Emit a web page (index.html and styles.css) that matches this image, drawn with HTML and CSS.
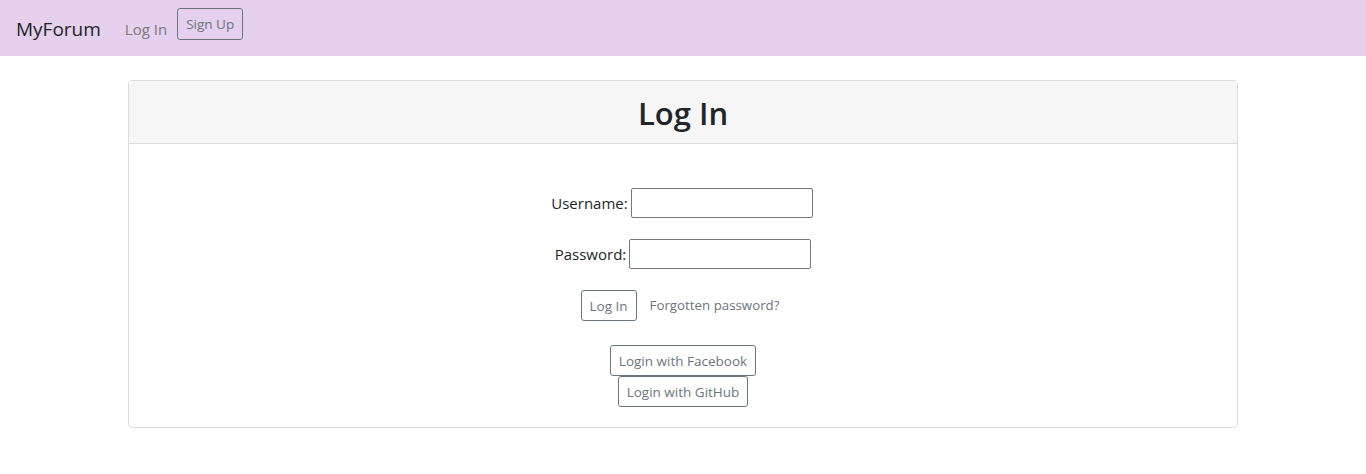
FILE: index.html
```html
<!DOCTYPE html>
<html>
<head>
<meta charset="utf-8">
<link rel="stylesheet" href="styles.css">
</head>
<body>
<nav class="navbar">
  <a class="brand" href="#">MyForum</a>
  <a class="nav-link" href="#">Log In</a>
  <a class="btn btn-sm" href="#">Sign Up</a>
</nav>
<main class="container">
  <section class="card">
    <header class="card-header"><h1>Log In</h1></header>
    <div class="card-body">
      <form class="login-form">
        <div class="field"><label>Username:</label><input class="u" type="text"></div>
        <div class="field"><label>Password:</label><input class="p" type="password"></div>
        <div class="actions">
          <button class="btn" type="button">Log In</button>
          <a class="link" href="#">Forgotten password?</a>
        </div>
      </form>
      <div class="social">
        <button class="btn" type="button">Login with Facebook</button>
        <button class="btn" type="button">Login with GitHub</button>
      </div>
    </div>
  </section>
</main>
</body>
</html>
```
FILE: styles.css
```css
* { box-sizing: border-box; }
body {
  margin: 0;
  font-family: "Open Sans", "Noto Sans", sans-serif;
  font-size: 15px;
  color: #212529;
  background: #fff;
}
a { text-decoration: none; }
.navbar {
  height: 56px;
  background: #e5d0ee;
  display: flex;
  align-items: center;
  padding: 0 16px;
}
.brand {
  font-size: 19px;
  color: #212529;
  margin-right: 24px;
  position: relative;
  top: 1px;
}
.nav-link {
  color: #7a7a7a;
  font-size: 15px;
  margin-right: 10px;
  position: relative;
  top: 1px;
}
.btn {
  display: inline-flex;
  align-items: center;
  justify-content: center;
  font-family: inherit;
  font-size: 13.5px;
  color: #6c757d;
  background: transparent;
  border: 1px solid #6c757d;
  border-radius: 3px;
  height: 31px;
  padding: 0 8px;
  cursor: pointer;
}
.btn-sm {
  height: 32px;
  font-size: 13.5px;
  padding: 0 8px;
  margin-top: -9px;
}
.container {
  width: 1110px;
  margin: 24px auto 0;
}
.card {
  border: 1px solid #dcdcdc;
  border-radius: 4px;
}
.card-header {
  height: 63px;
  background: #f6f6f6;
  border-bottom: 1px solid #dcdcdc;
  display: flex;
  align-items: center;
  justify-content: center;
  padding-top: 2px;
}
.card-header h1 {
  margin: 0;
  font-size: 31px;
  font-weight: 600;
  color: #212529;
}
.card-body {
  padding: 44px 20px 20px;
  display: flex;
  flex-direction: column;
  align-items: center;
}
.login-form {
  display: flex;
  flex-direction: column;
  align-items: center;
}
.field {
  display: flex;
  align-items: center;
  margin-bottom: 21px;
}
.field label { margin-right: 3px; }
.field input {
  width: 182px;
  height: 30px;
  border: 1px solid #767676;
  border-radius: 2px;
  font: inherit;
}
.field input.u { margin-right: 2px; }
.actions {
  display: flex;
  align-items: center;
  gap: 13px;
  margin-right: 6px;
}
.link {
  color: #6c757d;
  font-size: 13.3px;
  position: relative;
  top: -1px;
}
.social {
  margin-top: 24px;
  display: flex;
  flex-direction: column;
  align-items: center;
}
.social .btn { height: 31px; }
```
